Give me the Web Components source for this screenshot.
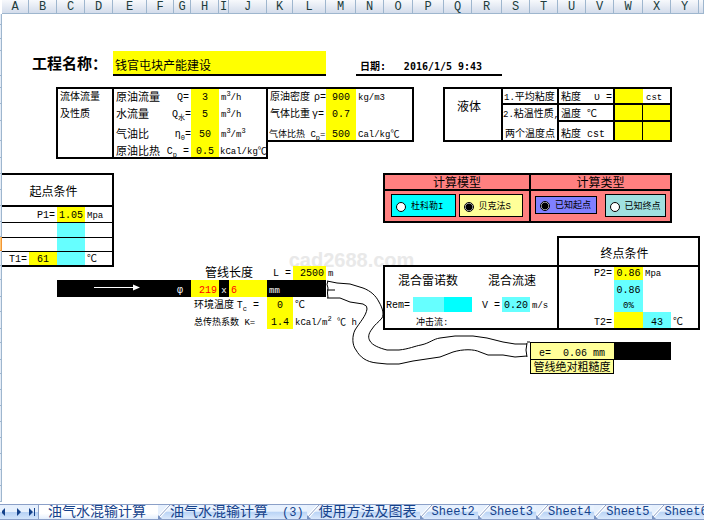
<!DOCTYPE html>
<html lang="zh-CN">
<head>
<meta charset="utf-8">
<title>油气水混输计算</title>
<style>
html,body{margin:0;height:100%}
body{display:flex;flex-direction:column;min-height:100vh;overflow:hidden;background:#fff;color:#000;font:10px "Liberation Mono","Noto Sans CJK SC",monospace}
sub,sup{font-size:7px;line-height:0}
small{font-size:9px}
sheet-tab small{font-size:12px}
</style>
</head>
<body>
<sheet-grid>
  <sheet-mark at="K15:P17">cad2688.com</sheet-mark>

  <sheet-cell at="A4:D4" align="end" size="title" pad="6">工程名称：</sheet-cell>
  <sheet-cell at="E4:L4" fill="#ff0" size="l" under>钱官屯块产能建设</sheet-cell>
  <sheet-cell at="N4" bold pad="4" under>日期:</sheet-cell>
  <sheet-cell at="O4:R4" bold align="center" under>2016/1/5 9:43</sheet-cell>

  <sheet-cell at="C6:D6" pad="3">流体流量</sheet-cell>
  <sheet-cell at="C7:D7" pad="3">及性质</sheet-cell>
  <sheet-cell at="E6:F6" size="m" pad="3">原油流量</sheet-cell>
  <sheet-cell at="G6" align="end">Q=</sheet-cell>
  <sheet-cell at="H6" fill="#ff0" align="center">3</sheet-cell>
  <sheet-cell at="I6:J6" size="s">m<sup>3</sup>/h</sheet-cell>
  <sheet-cell at="E7:F7" size="m" pad="3">水流量</sheet-cell>
  <sheet-cell at="G7" align="end" pad="0">Q<sub>水</sub>=</sheet-cell>
  <sheet-cell at="H7" fill="#ff0" align="center">5</sheet-cell>
  <sheet-cell at="I7:J7" size="s">m<sup>3</sup>/h</sheet-cell>
  <sheet-cell at="E8:F8" size="m" pad="3">气油比</sheet-cell>
  <sheet-cell at="G8" align="end" pad="0">η<sub>0</sub>=</sheet-cell>
  <sheet-cell at="H8" fill="#ff0" align="center">50</sheet-cell>
  <sheet-cell at="I8:J8" size="s">m<sup>3</sup>/m<sup>3</sup></sheet-cell>
  <sheet-cell at="E9:F9" size="m" pad="3">原油比热</sheet-cell>
  <sheet-cell at="G9" align="end">C<sub>p</sub> =</sheet-cell>
  <sheet-cell at="H9" fill="#ff0" align="center">0.5</sheet-cell>
  <sheet-cell at="I9:J9" size="s" pad="1">kCal/kg℃</sheet-cell>
  <sheet-cell at="C6:D9" frame></sheet-cell>
  <sheet-cell at="E6:J9" frame></sheet-cell>

  <sheet-cell at="K6:L6" pad="3">原油密度</sheet-cell>
  <sheet-cell at="L6" align="end" pad="0">ρ=</sheet-cell>
  <sheet-cell at="M6" fill="#ff0" align="center">900</sheet-cell>
  <sheet-cell at="N6:O6" size="s">kg/m3</sheet-cell>
  <sheet-cell at="K7:L7" pad="3">气体比重</sheet-cell>
  <sheet-cell at="L7" align="end">γ=</sheet-cell>
  <sheet-cell at="M7" fill="#ff0" align="center">0.7</sheet-cell>
  <sheet-cell at="K8:L8" size="s" pad="2">气体比热 C<sub>p</sub>=</sheet-cell>
  <sheet-cell at="M8" fill="#ff0" align="center">500</sheet-cell>
  <sheet-cell at="N8:O8" size="s">Cal/kg℃</sheet-cell>
  <sheet-cell at="K6:O8" frame></sheet-cell>

  <sheet-cell at="Q6:R7" size="l" align="center" middle>液体</sheet-cell>
  <sheet-cell at="S6:T6"><small>1.</small>平均粘度</sheet-cell>
  <sheet-cell at="S7:T7" pad="1"><small>2.</small>粘温性质<small>,</small></sheet-cell>
  <sheet-cell at="S8:T8" pad="3">两个温度点</sheet-cell>
  <sheet-cell at="U6" pad="3">粘度</sheet-cell>
  <sheet-cell at="V6" align="end">υ =</sheet-cell>
  <sheet-cell at="U7:V7" pad="3">温度 ℃</sheet-cell>
  <sheet-cell at="U8:V8" pad="3">粘度 cst</sheet-cell>
  <sheet-cell at="W6" fill="#ff0"></sheet-cell>
  <sheet-cell at="X6" size="s" pad="3">cst</sheet-cell>
  <sheet-cell at="W7:X8" fill="#ff0"></sheet-cell>
  <sheet-cell at="W7:W8" rule-right></sheet-cell>
  <sheet-cell at="Q6:X8" frame></sheet-cell>
  <sheet-cell at="S6:T6" frame></sheet-cell>
  <sheet-cell at="S7:T8" frame></sheet-cell>
  <sheet-cell at="U6:V6" frame></sheet-cell>
  <sheet-cell at="U7:X7" frame></sheet-cell>
  <sheet-cell at="U7:V8" frame></sheet-cell>
  <sheet-cell at="W6:X6" frame></sheet-cell>

  <sheet-cell at="A11:D12" size="l" align="center" middle>起点条件</sheet-cell>
  <sheet-cell at="B13" align="end">P1=</sheet-cell>
  <sheet-cell at="C13" fill="#ff0" align="center">1.05</sheet-cell>
  <sheet-cell at="D13" size="s">Mpa</sheet-cell>
  <sheet-cell at="C14:C16" fill="#6ff"></sheet-cell>
  <sheet-cell at="A16" align="end">T1=</sheet-cell>
  <sheet-cell at="B16" fill="#ff0" align="center">61</sheet-cell>
  <sheet-cell at="D16">℃</sheet-cell>
  <sheet-cell at="A13:D13" rule></sheet-cell>
  <sheet-cell at="A14:D14" rule></sheet-cell>
  <sheet-cell at="A15:D15" rule></sheet-cell>
  <sheet-cell at="A11:D12" frame="open"></sheet-cell>
  <sheet-cell at="A13:D16" frame="open"></sheet-cell>

  <sheet-cell at="O11:S11" fill="#ff8080" size="l" align="center">计算模型</sheet-cell>
  <sheet-cell at="T11:X11" fill="#ff8080" size="l" align="center">计算类型</sheet-cell>
  <sheet-cell at="O12:S13" fill="#ff8080" group>
    <radio-box name="model" tint="#0ff">杜科勒I</radio-box>
    <radio-box name="model" tint="#ff9" checked>贝克法S</radio-box>
  </sheet-cell>
  <sheet-cell at="T12:X13" fill="#ff8080" group="wide">
    <radio-box name="kind" tint="#8080ff" small checked>已知起点</radio-box>
    <radio-box name="kind" tint="#a0e0e0">已知终点</radio-box>
  </sheet-cell>
  <sheet-cell at="O11:S11" frame></sheet-cell>
  <sheet-cell at="T11:X11" frame></sheet-cell>
  <sheet-cell at="O12:S13" frame></sheet-cell>
  <sheet-cell at="T12:X13" frame></sheet-cell>

  <sheet-cell at="H17:J17" size="l" align="center">管线长度</sheet-cell>
  <sheet-cell at="K17" align="end">L =</sheet-cell>
  <sheet-cell at="L17" fill="#ff0" align="end">2500</sheet-cell>
  <sheet-cell at="M17" size="s">m</sheet-cell>
  <sheet-cell at="C18:L18" fill="#000"></sheet-cell>
  <flow-arrow at="D18:E18"></flow-arrow>
  <sheet-cell at="F18:G18" ink="#fff" align="end" pad="8">φ</sheet-cell>
  <sheet-cell at="H18" fill="#ff0" ink="#f00" align="end">219</sheet-cell>
  <sheet-cell at="I18" ink="#fff" size="s" align="center" pad="0">x</sheet-cell>
  <sheet-cell at="J18" fill="#ff0" ink="#f00">6</sheet-cell>
  <sheet-cell at="K18" ink="#fff" size="s">mm</sheet-cell>
  <sheet-cell at="H19:J19" pad="3">环境温度</sheet-cell>
  <sheet-cell at="J19" align="end" pad="8">T<sub>c</sub> =</sheet-cell>
  <sheet-cell at="K19" fill="#ff0" align="center">0</sheet-cell>
  <sheet-cell at="L19">℃</sheet-cell>
  <sheet-cell at="H20:J20" size="s" pad="3">总传热系数 K=</sheet-cell>
  <sheet-cell at="K20" fill="#ff0" align="center">1.4</sheet-cell>
  <sheet-cell at="L20:N20" size="s">kCal/m<sup>2</sup> ℃ h</sheet-cell>
  <pipe-bend at="M18:S23"></pipe-bend>

  <sheet-cell at="O17:Q18" size="l" align="center" double>混合雷诺数</sheet-cell>
  <sheet-cell at="R17:T18" size="l" pad="16" double>混合流速</sheet-cell>
  <sheet-cell at="O19">Rem=</sheet-cell>
  <sheet-cell at="P19" fill="#6ff"></sheet-cell>
  <sheet-cell at="Q19" fill="#0ff"></sheet-cell>
  <sheet-cell at="R19" align="end">V =</sheet-cell>
  <sheet-cell at="S19" fill="#6ff" align="center">0.20</sheet-cell>
  <sheet-cell at="T19" size="s">m/s</sheet-cell>
  <sheet-cell at="P20:Q20" size="s" pad="3">冲击流:</sheet-cell>
  <sheet-cell at="U15:Y16" size="l" align="center" middle>终点条件</sheet-cell>
  <sheet-cell at="V17" align="end">P2=</sheet-cell>
  <sheet-cell at="W17" fill="#ff0" align="center">0.86</sheet-cell>
  <sheet-cell at="X17" size="s">Mpa</sheet-cell>
  <sheet-cell at="W18" fill="#6ff" align="center">0.86</sheet-cell>
  <sheet-cell at="W19" fill="#6ff" size="s" align="center">0%</sheet-cell>
  <sheet-cell at="V20" align="end">T2=</sheet-cell>
  <sheet-cell at="W20" fill="#ff0"></sheet-cell>
  <sheet-cell at="X20" fill="#6ff" align="center">43</sheet-cell>
  <sheet-cell at="Y20">℃</sheet-cell>
  <sheet-cell at="O17:T20" frame></sheet-cell>
  <sheet-cell at="U15:Y16" frame></sheet-cell>
  <sheet-cell at="U17:Y20" frame></sheet-cell>

  <sheet-cell at="T22:V22" fill="#ff9" align="end" pad="9">e=  0.06 mm</sheet-cell>
  <sheet-cell at="W22:X22" fill="#000"></sheet-cell>
  <sheet-cell at="T23:V23" fill="#ff9" size="m" align="center" pad="0">管线绝对粗糙度</sheet-cell>
  <sheet-cell at="T22:X22" frame="thin"></sheet-cell>
  <sheet-cell at="T23:V23" frame="thin"></sheet-cell>
</sheet-grid>
<sheet-tabs>
  <sheet-tab active>油气水混输计算</sheet-tab>
  <sheet-tab>油气水混输计算　<small>(3)</small></sheet-tab>
  <sheet-tab>使用方法及图表</sheet-tab>
  <sheet-tab>Sheet2</sheet-tab>
  <sheet-tab>Sheet3</sheet-tab>
  <sheet-tab>Sheet4</sheet-tab>
  <sheet-tab>Sheet5</sheet-tab>
  <sheet-tab>Sheet6</sheet-tab>
</sheet-tabs>

<script>
const COLS=[27,28,28,28,34,27,17,28,10,38,26,33,30,28,29,31,28,30,28,28,28,28,29,28,28,5];
const ROWS=[11,14,12,25,12,16,17,20,17,16,16,16,16,15,14,15,14,17,15,17,14,17,14,16,16,16,16,16,16,16,16];

// Turns an address such as "C6:D9" into grid lines; line 1 holds the headings.
function place(el){
  const [a,b=a]=el.getAttribute('at').split(':');
  const c=s=>s.charCodeAt(0)-63, r=s=>+s.slice(1)+1;
  el.style.gridArea=`${r(a)} / ${c(a)} / ${r(b)+1} / ${c(b)+1}`;
}
function shadow(el,html){const r=el.attachShadow({mode:'open'});r.innerHTML=html;return r}

customElements.define('sheet-grid',class extends HTMLElement{
  constructor(){
    super();
    const cols=COLS.map((w,i)=>`<div class="col" style="grid-column:${i+2}">${i<25?String.fromCharCode(65+i):''}</div>`).join('');
    const rows=ROWS.map((h,i)=>`<div class="row${i===14?' on':''}" style="grid-row:${i+2}"></div>`).join('');
    shadow(this,`<style>
      :host{display:grid;flex:1 1 0;min-height:0;overflow:hidden;align-content:start;
        grid-template-columns:2px ${COLS.map(w=>`minmax(0,${w}fr)`).join(' ')};
        grid-template-rows:14px ${ROWS.map(h=>`minmax(${h}px,auto)`).join(' ')}}
      .col{grid-row:1;overflow:hidden;box-sizing:border-box;text-align:center;font-size:12px;line-height:14px;color:#203c3c;
        border-right:1px solid #9eb6ce;border-bottom:1px solid #9eb6ce;background:linear-gradient(#f7f9fc,#d3dceb)}
      .row{grid-column:1;background:#e4ecf7;border-right:1px solid #9eb6ce;border-bottom:1px solid #9eb6ce}
      .on{background:#ffc776;border-color:#f29536}
    </style>${cols}${rows}<slot></slot>`);
  }
});

customElements.define('sheet-cell',class extends HTMLElement{
  constructor(){
    super();
    shadow(this,`<style>
      :host{display:flex;align-items:flex-end;min-width:0;box-sizing:border-box;white-space:pre;line-height:12px;
        padding:0 var(--pad,2px);background:var(--fill,transparent);color:var(--ink,inherit)}
      :host([align=end]){justify-content:flex-end}
      :host([align=center]){justify-content:center;padding:0}
      :host([middle]){align-items:center;padding:6px 8px 0 0}
      :host([double]){align-items:center}
      :host([size=s]){font-size:9px}
      :host([size=m]){font-size:11px}
      :host([size=l]){font-size:12px}
      :host([size=title]){font-size:15px;font-weight:bold;line-height:20px}
      :host([bold]){font-family:"DejaVu Sans Mono","Noto Sans CJK SC",monospace;font-weight:bold}
      :host([under]){border-bottom:2px solid #000;line-height:14px}
      :host([rule]){margin-bottom:-1px;border-bottom:1px solid #000;z-index:1}
      :host([rule-right]){border-right:1px solid #000;z-index:1}
      :host([frame]){border:2px solid #000;margin:-1px;z-index:2;pointer-events:none}
      :host([frame=open]){border-left:0;margin-left:0}
      :host([frame=thin]){border-width:1px;margin:-1px 0 0}
      :host([group]){white-space:normal;align-items:flex-start;padding:4px 7px}
      :host([group]) span{display:flex;flex:1;gap:3px;align-items:flex-start}
      :host([group=wide]){padding:4px 5px}
      :host([group=wide]) span{gap:8px}
    </style><span><slot></slot></span>`);
  }
  connectedCallback(){
    place(this);
    if(this.hasAttribute('fill'))this.style.setProperty('--fill',this.getAttribute('fill'));
    if(this.hasAttribute('ink'))this.style.setProperty('--ink',this.getAttribute('ink'));
    if(this.hasAttribute('pad'))this.style.setProperty('--pad',this.getAttribute('pad')+'px');
  }
});

customElements.define('radio-box',class extends HTMLElement{
  constructor(){
    super();
    const r=shadow(this,`<style>
      :host{display:block;flex:1 1 0;min-width:0}
      label{display:flex;align-items:center;gap:5px;box-sizing:border-box;height:23px;padding:2px 0 0 4px;
        border:1px solid #000;background:var(--tint);font-size:9px;line-height:14px;white-space:nowrap;overflow:hidden}
      :host([small]) label{height:18px;margin-top:2px}
      input{appearance:none;flex:none;width:10px;height:10px;margin:0;border:1px solid #000;border-radius:50%;background:#fff}
      input:checked{background:radial-gradient(#000 0 3px,#fff 4px)}
    </style><label><input type="radio"><slot></slot></label>`);
    this.input=r.querySelector('input');
  }
  connectedCallback(){
    this.style.setProperty('--tint',this.getAttribute('tint'));
    this.input.checked=this.hasAttribute('checked');
    this.input.setAttribute('aria-label',this.textContent);
    this.input.addEventListener('change',()=>{
      document.querySelectorAll(`radio-box[name=${this.getAttribute('name')}]`).forEach(b=>{if(b!==this)b.input.checked=false});
    });
  }
});

customElements.define('sheet-mark',class extends HTMLElement{
  constructor(){
    super();
    shadow(this,`<style>:host{display:flex;align-items:flex-end;justify-content:center;padding:0 8px 10px 0;
      font:bold 20px/20px "Liberation Sans",sans-serif;color:#e9e9e9}</style><slot></slot>`);
  }
  connectedCallback(){place(this)}
});

customElements.define('flow-arrow',class extends HTMLElement{
  constructor(){
    super();
    shadow(this,`<style>:host{display:block;min-width:0}svg{display:block;width:100%;height:17px}</style>
      <svg viewBox="0 0 62 17" aria-hidden="true"><path d="M9 7.5H50" stroke="#fff"/><path d="M48 4.500L55 7.500L48 10.500Z" fill="#fff"/></svg>`);
  }
  connectedCallback(){place(this)}
});

customElements.define('pipe-bend',class extends HTMLElement{
  constructor(){
    super();
    shadow(this,`<style>:host{display:block;min-width:0}svg{display:block;width:100%;height:94px;overflow:visible}</style>
      <svg viewBox="0 0 204 94" preserveAspectRatio="none" fill="none" stroke="#000" aria-hidden="true">
        <path d="M1 1L11 3L24 4L37 8C45 11 50 16 53 22C57 29 58 34 56 38C52 43 49 44 46 49C42 54 42 58 44 61C46 65 53 68 61 70H73C83 69 89 66 95 65C104 63 107 59 114 58L129 56H147L161 58L177 62L189 64H201"/>
        <path d="M1 18H14L24 22L37 24Q42 26 41 29C40 36 34 42 29 50C26 56 26 65 30 70C34 77 40 82 51 83L61 84H73L87 81L114 77L127 72C137 69 148 69 154 72L162 75H177L189 77L201 76"/>
        <path d="M2 1Q0 4 2 8Q1 13 2 18M1 10H9M201 63Q199 70 201 77M201 62H204"/>
      </svg>`);
  }
  connectedCallback(){place(this)}
});

customElements.define('sheet-tabs',class extends HTMLElement{
  constructor(){
    super();
    shadow(this,`<style>
      :host{display:flex;flex:none;box-sizing:border-box;height:16px;overflow:hidden;border-top:1px solid #8ba0c8;border-bottom:1px solid #8ba0c8;background:#cfe0f7}
      nav{display:flex;flex:none;width:38px;border-right:1px solid #8ba0c8;background:linear-gradient(#e6f0fd 0 50%,#b5d0f4 50%,#d2e4fb)}
      button{flex:1;border:0;padding:0;background:none;display:grid;place-items:center}
      svg{width:8px;height:8px;fill:#15428b}
    </style>
    <nav>
      <button aria-label="上一个"><svg viewBox="0 0 8 8"><path d="M3 0V8L-1 4Z"/></svg></button>
      <button aria-label="下一个"><svg viewBox="0 0 8 8"><path d="M2 0V8L6 4Z"/></svg></button>
      <button aria-label="最后一个"><svg viewBox="0 0 8 8"><path d="M1 0V8L5 4ZM6 0H7V8H6Z"/></svg></button>
    </nav><slot></slot>`);
  }
});

customElements.define('sheet-tab',class extends HTMLElement{
  constructor(){
    super();
    shadow(this,`<style>
      :host{display:block;flex:none}
      button{display:flex;align-items:center;height:14px;border:0;margin:0;padding:0 3px 0 0;color:#15428b;white-space:pre;
        font:12px/14px "Liberation Mono","Noto Sans CJK SC",monospace;background:linear-gradient(#e9f2fe 0 45%,#b9d3f5 50%,#dbe9fc)}
      :host(:nth-child(-n+3)) button{font-size:14px}
      :host([active]) button{padding:0 12px 0 9px;background:linear-gradient(#fff,#fff 60%,#e3eefc)}
      svg{flex:none;width:12px;height:14px}
      :host([active]) svg{display:none}
    </style><button role="tab"><svg viewBox="0 0 12 14" aria-hidden="true"><path d="M0 0H12L0 12Z" fill="#e6f0fd"/><path d="M0 13L12 0" stroke="#fff" stroke-width="3"/><path d="M0 13L12 0" stroke="#8ba0c8"/><path d="M0 14V10L4 14Z" fill="#7a94c4"/></svg><span><slot></slot></span></button>`);
  }
});
</script>
</body>
</html>
